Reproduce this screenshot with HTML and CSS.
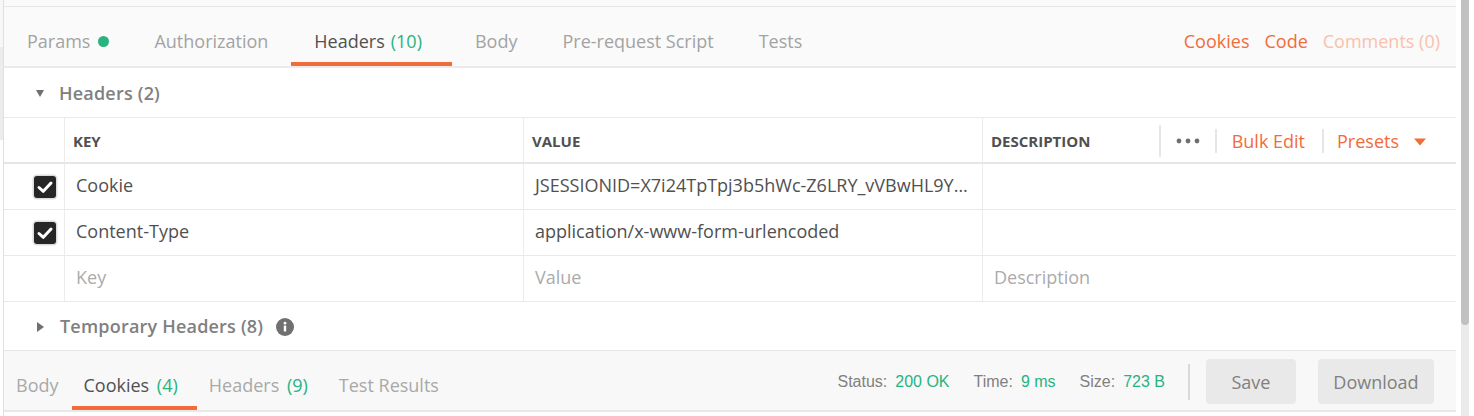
FILE: index.html
```html
<!DOCTYPE html>
<html lang="en">
<head>
<meta charset="utf-8">
<title>Headers</title>
<link rel="stylesheet" href="styles.css">
</head>
<body>
<div class="window">
  <div class="edge"><div class="edge-a"></div><div class="edge-b"></div></div>
  <main class="panel">
    <div class="topstrip"></div>
    <nav class="tabbar">
      <div class="tabs">
        <div class="tab first">Params<span class="dot"></span></div>
        <div class="tab second">Authorization</div>
        <div class="tab active wide">Headers <span class="count">(10)</span></div>
        <div class="tab">Body</div>
        <div class="tab">Pre-request Script</div>
        <div class="tab">Tests</div>
      </div>
      <div class="links">
        <span class="link">Cookies</span>
        <span class="link">Code</span>
        <span class="link faded">Comments (0)</span>
      </div>
    </nav>

    <div class="section"><span class="tri-down"></span>Headers (2)</div>

    <div class="table">
      <div class="row head">
        <div class="cell chk"></div>
        <div class="cell th">KEY</div>
        <div class="cell th">VALUE</div>
        <div class="cell th desc">
          <span>DESCRIPTION</span>
          <div class="actions">
            <span class="sep tall"></span>
            <svg class="dots" width="24" height="6" viewBox="0 0 24 6"><circle cx="3" cy="3" r="2.4" fill="#6f6f6f"/><circle cx="12" cy="3" r="2.4" fill="#6f6f6f"/><circle cx="21" cy="3" r="2.4" fill="#6f6f6f"/></svg>
            <span class="sep"></span>
            <span class="act">Bulk Edit</span>
            <span class="sep"></span>
            <span class="act">Presets</span>
            <svg class="caret" width="12" height="8" viewBox="0 0 12 8"><path d="M0 0.5 H12 L6 7.5 Z" fill="#f26b3a"/></svg>
          </div>
        </div>
      </div>
      <div class="row">
        <div class="cell chk"><span class="box"><svg width="22" height="22" viewBox="0 0 22 22"><path d="M5 11.5 L9.3 15.3 L17 7" fill="none" stroke="#fff" stroke-width="3" stroke-linecap="round" stroke-linejoin="round"/></svg></span></div>
        <div class="cell">Cookie</div>
        <div class="cell">JSESSIONID=X7i24TpTpj3b5hWc-Z6LRY_vVBwHL9Y…</div>
        <div class="cell"></div>
      </div>
      <div class="row">
        <div class="cell chk"><span class="box"><svg width="22" height="22" viewBox="0 0 22 22"><path d="M5 11.5 L9.3 15.3 L17 7" fill="none" stroke="#fff" stroke-width="3" stroke-linecap="round" stroke-linejoin="round"/></svg></span></div>
        <div class="cell">Content-Type</div>
        <div class="cell">application/x-www-form-urlencoded</div>
        <div class="cell"></div>
      </div>
      <div class="row">
        <div class="cell chk"></div>
        <div class="cell ph">Key</div>
        <div class="cell ph">Value</div>
        <div class="cell ph">Description</div>
      </div>
    </div>

    <div class="section temp"><span class="tri-right"></span>Temporary Headers (8)
      <svg class="info" width="18" height="18" viewBox="0 0 18 18"><circle cx="9" cy="9" r="9" fill="#707070"/><circle cx="9" cy="5.2" r="1.4" fill="#fff"/><rect x="7.8" y="7.6" width="2.4" height="6" rx="0.6" fill="#fff"/></svg>
    </div>

    <div class="response">
      <div class="btabs">
        <div class="btab">Body</div>
        <div class="btab active cnt">Cookies <span class="count">(4)</span></div>
        <div class="btab cnt">Headers <span class="count">(9)</span></div>
        <div class="btab">Test Results</div>
      </div>
      <div class="meta">
        <span class="stat">Status:<span class="val">200 OK</span></span>
        <span class="stat">Time:<span class="val">9 ms</span></span>
        <span class="stat">Size:<span class="val">723 B</span></span>
        <span class="vsep"></span>
        <button class="btn save">Save</button>
        <button class="btn download">Download</button>
      </div>
    </div>
  </main>
  <div class="gutter"></div>
  <div class="scrollbar"><div class="thumb"></div></div>
</div>
</body>
</html>
```

FILE: styles.css
```css
* { box-sizing: border-box; }
html, body { margin: 0; padding: 0; background: #fff; }
body {
  font-family: "Open Sans", "Liberation Sans", sans-serif;
  font-size: 18px;
  line-height: 24px;
  color: #505050;
}

.window { display: flex; height: 416px; overflow: hidden; }

.edge { width: 4px; border-right: 1px solid #e0e0e0; display: flex; flex-direction: column; }
.edge-a { height: 47px; background: #f7f7f7; }
.edge-b { height: 93px; background: #ececec; }

.panel { width: 1452px; display: flex; flex-direction: column; }
.gutter { width: 5px; }
.scrollbar { width: 8px; background: #ebebeb; }
.thumb { height: 325px; background: #c1c1c1; border-radius: 0 0 4px 4px; }

/* top request tabs */
.topstrip { height: 7px; background: #fafafa; border-bottom: 1px solid #e6e6e6; }
.tabbar {
  height: 61px;
  background: #fafafa;
  border-bottom: 2px solid #ebebeb;
  display: flex;
  justify-content: space-between;
}
.tabs { display: flex; }
.tab {
  height: 59px;
  padding: 22px 22px 0 23px;
  color: #a3a3a3;
  display: flex;
  align-items: flex-start;
  white-space: nowrap;
}
.tab.first { padding-right: 22px; }
.tab.second { padding-right: 23px; }
.tab.active { color: #505050; border-bottom: 4px solid #f26b3a; }
.tab.wide { padding-right: 30px; }
.count { color: #26b47f; margin-left: 5px; }
.tab .count { margin-left: 6px; }
.dot {
  width: 11px; height: 11px; border-radius: 50%;
  background: #26b47f;
  margin: 7px 0 0 8px;
}
.links { display: flex; gap: 15px; padding: 22px 16px 0 0; white-space: nowrap; }
.link { color: #f26b3a; }
.link.faded { color: #f8c1ac; }

/* section headers */
.section {
  height: 49px;
  display: flex;
  align-items: center;
  padding-left: 32px;
  font-weight: 600;
  letter-spacing: 0.2px;
  color: #808080;
}
.tri-down {
  width: 0; height: 0;
  border-left: 4.5px solid transparent;
  border-right: 4.5px solid transparent;
  border-top: 7px solid #707070;
  margin: 2px 15px 0 0;
}
.section.temp { height: 48px; }
.tri-right {
  width: 0; height: 0;
  border-top: 5px solid transparent;
  border-bottom: 5px solid transparent;
  border-left: 7.5px solid #707070;
  margin: 1px 16px 0 1px;
}
.info { margin-left: 13px; margin-top: 2px; }

/* table */
.table { border-top: 1px solid #e9e9e9; }
.row {
  display: grid;
  grid-template-columns: 60px 459px 459px 474px;
  height: 46px;
  border-bottom: 1px solid #e9e9e9;
}
.row.head { border-bottom: 2px solid #e6e6e6; }
.cell {
  display: flex;
  align-items: center;
  border-left: 1px solid #ececec;
  padding-left: 11px;
  padding-bottom: 3px;
  white-space: nowrap;
  overflow: hidden;
}
.row.head .cell { padding-bottom: 0; padding-top: 2px; }
.cell.chk { border-left: none; padding-left: 30px; padding-bottom: 0; }
.cell.th {
  padding-left: 8px;
  font-size: 15px;
  line-height: 20px;
  font-weight: 700;
  color: #505050;
}
.cell.ph { color: #ababab; }
.cell.desc { padding-right: 30px; }
.actions { margin-left: auto; display: flex; align-items: center; font-size: 18px; line-height: 24px; font-weight: 400; }
.sep { width: 2px; height: 24px; background: #e6e6e6; }
.sep.tall { height: 32px; }
.dots { margin: 0 15px 0 15px; }
.act { color: #f26b3a; margin: 0 17px 0 15px; }
.act + .sep + .act { margin: 0 15px 0 13px; }
.caret { margin-top: 1px; }
.box {
  width: 22px; height: 22px;
  background: #262626;
  border-radius: 3px;
  box-shadow: 0 0 0 1.5px #dcdcdc;
  display: flex;
}

/* response bar */
.response {
  height: 62px;
  background: #f8f8f8;
  border-top: 1px solid #e6e6e6;
  border-bottom: 2px solid #e8e8e8;
  display: flex;
}
.btabs { display: flex; }
.btab {
  height: 59px;
  padding: 22px 13px 0 12px;
  color: #a9a9a9;
  white-space: nowrap;
}
.btab.cnt { padding-right: 19px; }
.btab .count { margin-left: 3px; }
.btab.active { color: #505050; border-bottom: 4px solid #f26b3a; }

.meta {
  margin-left: auto;
  display: flex;
  align-items: center;
  padding: 2px 22px 0 0;
}
.stat {
  font-family: "Liberation Sans", Arial, sans-serif;
  font-size: 16px;
  line-height: 20px;
  color: #808080;
  margin-right: 24px;
  white-space: nowrap;
}
.stat .val { color: #26b47f; margin-left: 8px; }
.vsep { width: 2px; height: 36px; background: #d9d9d9; margin: 0 16px 0 -1px; }
.btn {
  height: 45px;
  border: none;
  border-radius: 4px;
  background: #e9e9e9;
  color: #808080;
  font-family: "Open Sans", sans-serif;
  font-size: 18px;
  line-height: 24px;
  padding: 0;
}
.btn.save { width: 90px; margin-right: 22px; }
.btn.download { width: 116px; }
```
